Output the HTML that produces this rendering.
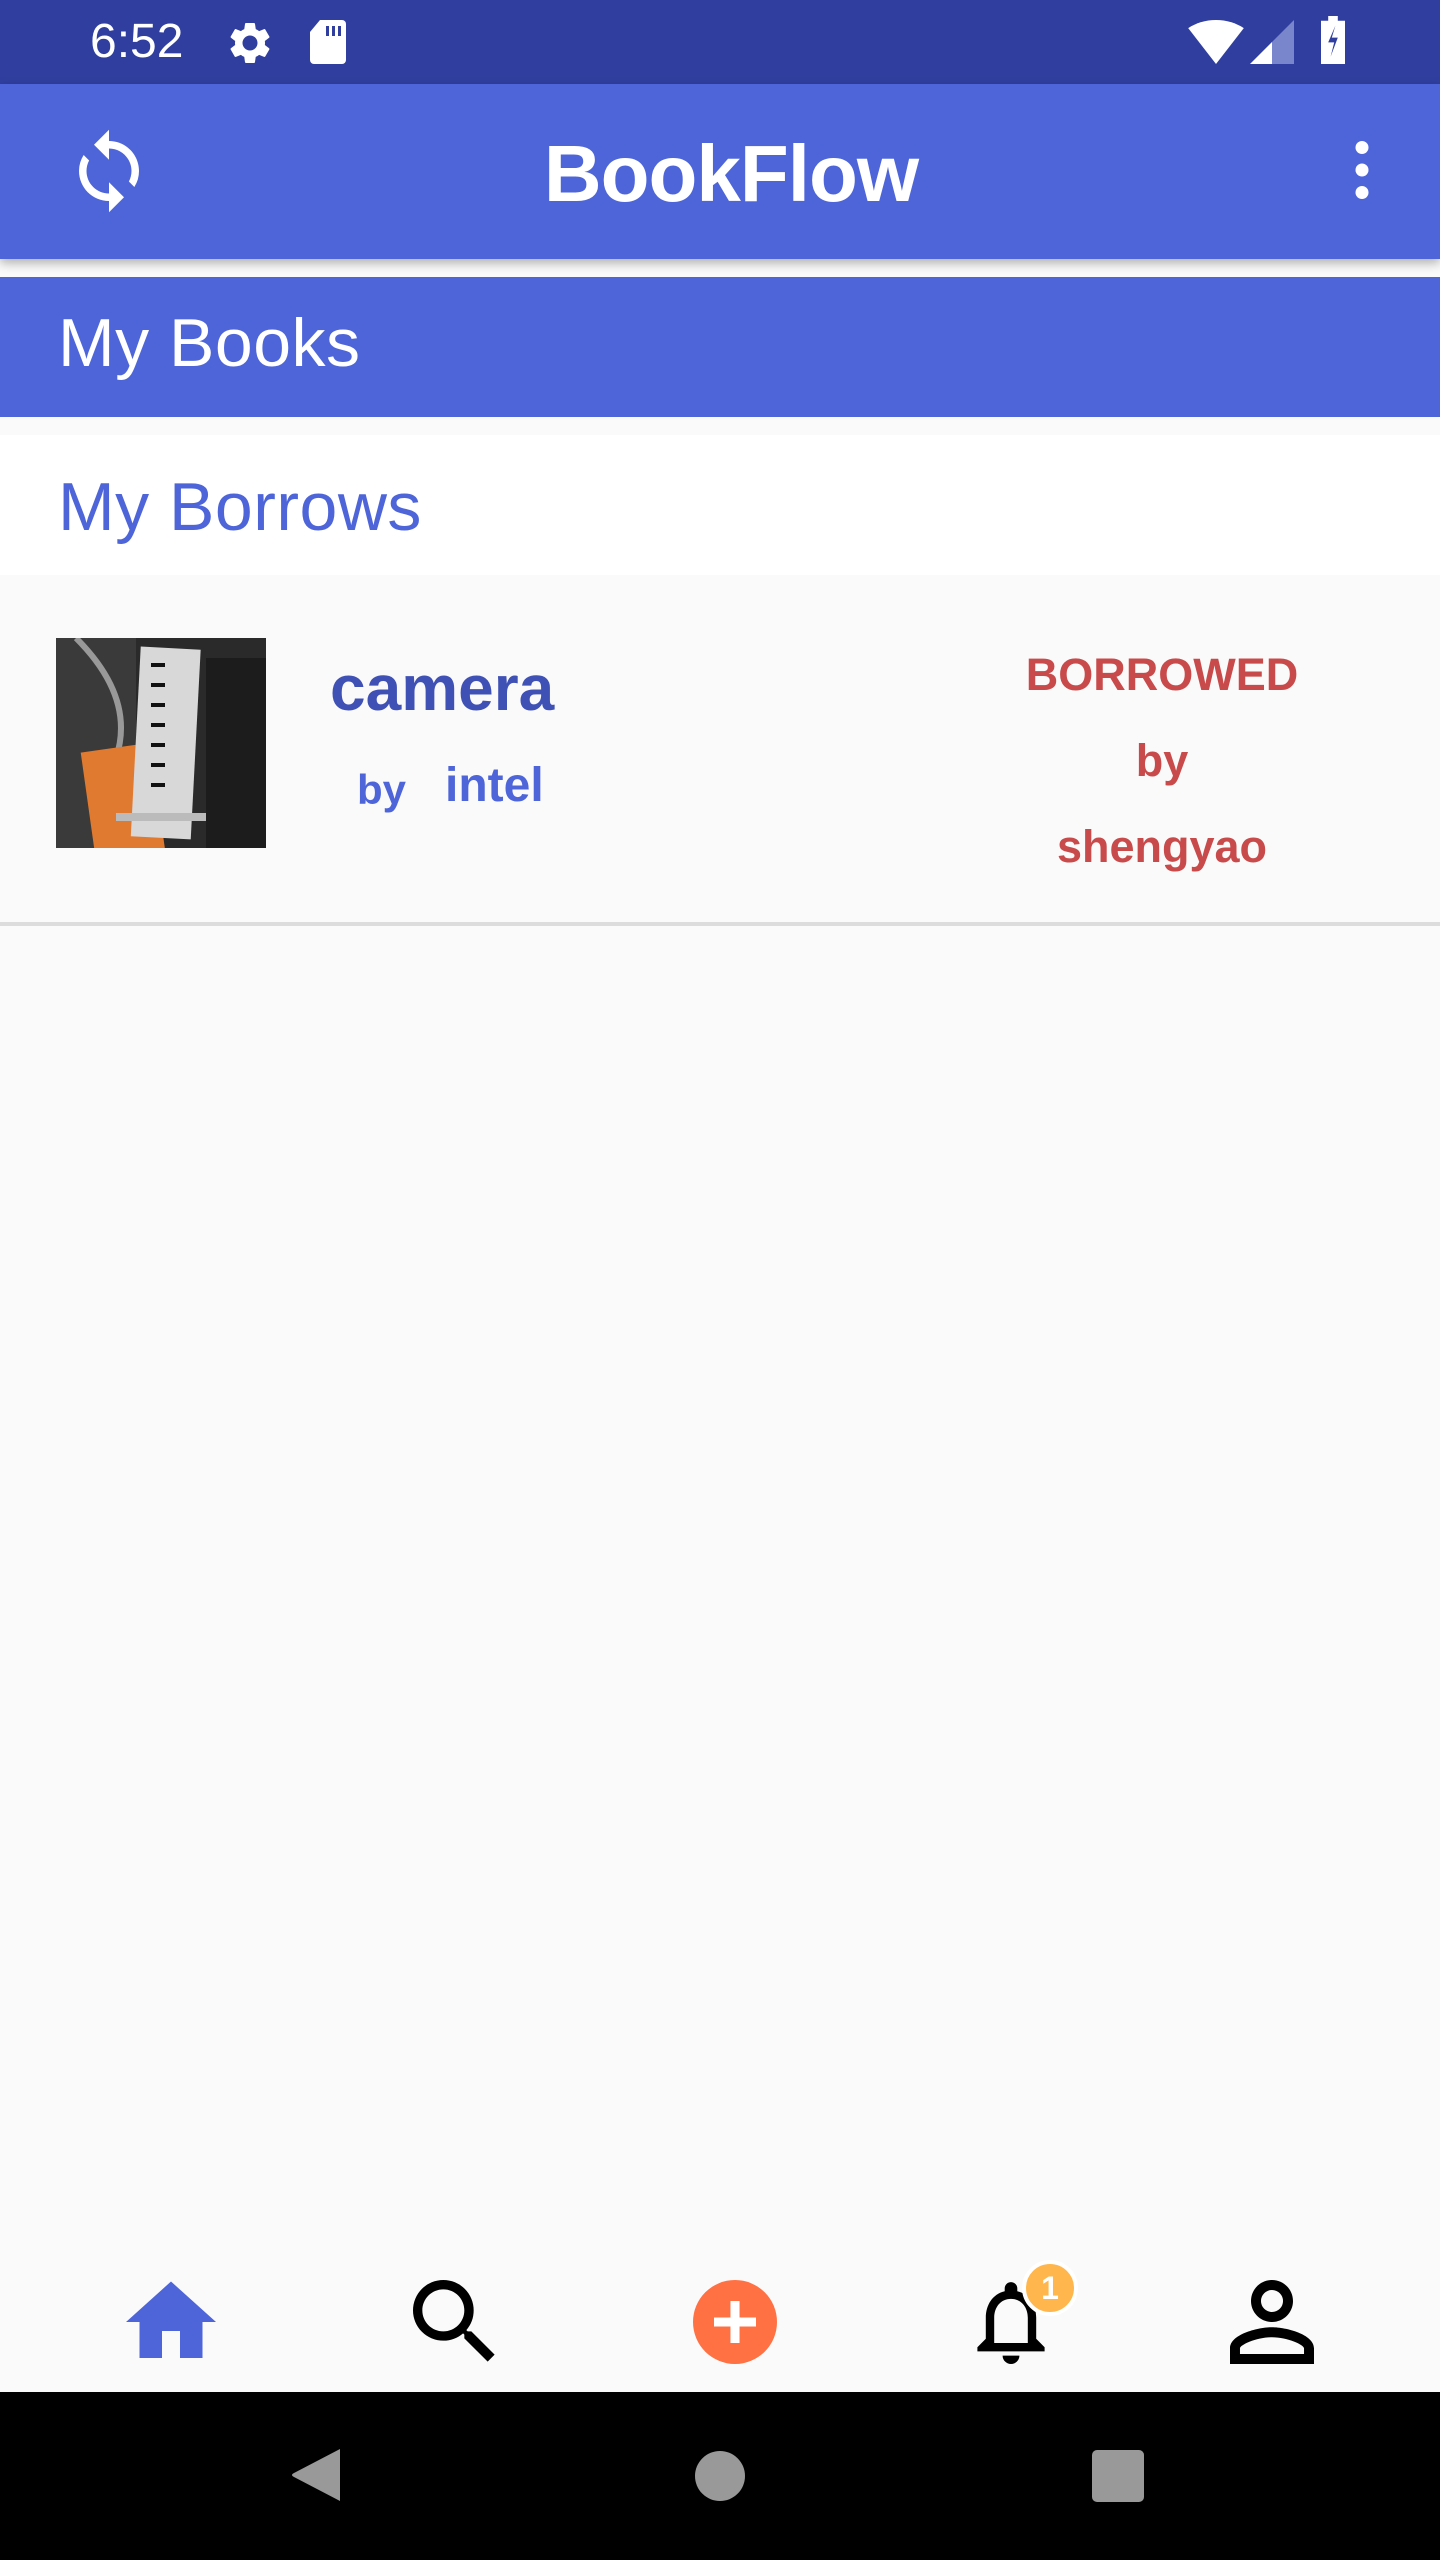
<!DOCTYPE html>
<html><head><meta charset="utf-8"><style>
*{margin:0;padding:0;box-sizing:border-box}
body{width:1440px;height:2560px;background:#fafafa;font-family:"Liberation Sans",Roboto,sans-serif;position:relative;overflow:hidden}
.abs{position:absolute}
</style></head><body>
<div class="abs" style="left:0;top:0;width:1440px;height:84px;background:#303f9f"></div>
<div class="abs" style="left:90px;top:14px;color:#fff;font-size:48px;line-height:56px">6:52</div>
<svg class="abs" style="left:222px;top:18px" width="56" height="50" viewBox="0 0 24 24"><path fill="#fff" d="M19.14 12.94c.04-.3.06-.61.06-.94 0-.32-.02-.64-.07-.94l2.030-1.58a.49.49 0 0 0 .12-.61l-1.92-3.32a.488.488 0 0 0-.59-.22l-2.39.96c-.5-.38-1.03-.7-1.62-.94l-.36-2.54a.484.484 0 0 0-.48-.41h-3.84c-.24 0-.43.17-.47.41l-.36 2.54c-.59.24-1.130.57-1.62.94l-2.39-.96c-.22-.08-.47 0-.59.22L2.74 8.87c-.12.21-.08.47.12.61l2.03 1.58c-.05.3-.09.63-.09.94s.02.64.07.94l-2.03 1.58a.49.49 0 0 0-.12.61l1.92 3.32c.12.22.37.29.59.22l2.39-.96c.5.38 1.03.7 1.62.94l.36 2.54c.05.24.24.41.48.41h3.84c.24 0 .44-.17.47-.41l.36-2.54c.59-.24 1.13-.56 1.62-.94l2.39.96c.22.08.47 0 .59-.22l1.92-3.32c.12-.22.07-.47-.12-.61l-2.01-1.58zM12 15.6c-1.98 0-3.6-1.62-3.6-3.6s1.62-3.6 3.6-3.6 3.6 1.62 3.6 3.6-1.62 3.6-3.6 3.6z"/></svg>
<svg class="abs" style="left:308px;top:18px" width="40" height="48" viewBox="0 0 20 24"><path fill="#fff" d="M6 1h11a2 2 0 0 1 2 2v18a2 2 0 0 1-2 2H3a2 2 0 0 1-2-2V7z"/><rect x="9" y="4" width="1.5" height="5" fill="#303f9f"/><rect x="12" y="4" width="1.5" height="5" fill="#303f9f"/><rect x="15" y="4" width="1.5" height="5" fill="#303f9f"/></svg>
<svg class="abs" style="left:1188px;top:20px" width="56" height="44" viewBox="0 0 24 19"><path fill="#fff" d="M12 19L0 3.5C3.3 1.3 7.5 0 12 0s8.7 1.3 12 3.5z"/></svg>
<svg class="abs" style="left:1250px;top:20px" width="44" height="44" viewBox="0 0 22 22"><path fill="#fff" d="M0 22L11 11V22z"/><path fill="#7986cb" d="M11 11L22 0V22H11z"/></svg>
<svg class="abs" style="left:1318px;top:16px" width="30" height="48" viewBox="0 0 12 20"><path fill="#fff" d="M4 0h4v2h3v18H1V2h3z"/><path fill="#303f9f" d="M7 4L4 11h2.5L5 17l3-8H5.5z"/></svg>

<div class="abs" style="left:0;top:84px;width:1440px;height:175px;background:#4d65d9;box-shadow:0 4px 10px rgba(0,0,0,.3)"></div>
<svg class="abs" style="left:64px;top:122px" width="90" height="98" viewBox="0 0 24 24"><path fill="#fff" d="M12 4V1L8 5l4 4V6c3.31 0 6 2.69 6 6 0 1.01-.25 1.97-.7 2.8l1.46 1.46A7.93 7.93 0 0 0 20 12c0-4.42-3.58-8-8-8zm0 14c-3.310 0-6-2.69-6-6 0-1.01.25-1.97.7-2.8L5.24 7.74A7.93 7.93 0 0 0 4 12c0 4.42 3.58 8 8 8v3l4-4-4-4v3z"/></svg>
<div class="abs" style="left:0;width:1440px;top:124px;text-align:center;color:#fff;font-weight:bold;font-size:80px;line-height:100px;padding-left:22px;letter-spacing:-1px">BookFlow</div>
<svg class="abs" style="left:1340px;top:140px" width="44" height="60" viewBox="0 0 10 24"><circle cx="5" cy="3" r="2.6" fill="#fff"/><circle cx="5" cy="12" r="2.6" fill="#fff"/><circle cx="5" cy="21" r="2.6" fill="#fff"/></svg>

<div class="abs" style="left:0;top:277px;width:1440px;height:140px;background:#4d65d9"></div>
<div class="abs" style="left:58px;top:298px;color:#fff;font-size:68px;line-height:90px;letter-spacing:0.5px">My Books</div>
<div class="abs" style="left:0;top:435px;width:1440px;height:140px;background:#fff"></div>
<div class="abs" style="left:58px;top:462px;color:#4d65d9;font-size:68px;line-height:90px;letter-spacing:0.5px">My Borrows</div>

<svg class="abs" style="left:56px;top:638px" width="210" height="210" viewBox="0 0 210 210">
<rect width="210" height="210" fill="#2a2a2a"/>
<rect x="0" y="0" width="80" height="210" fill="#3a3a3a"/>
<path d="M20 0 Q80 60 60 120 L40 200" stroke="#999" stroke-width="6" fill="none"/>
<rect x="30" y="110" width="70" height="140" fill="#e07a30" transform="rotate(-8 60 150)"/>
<rect x="80" y="10" width="60" height="190" fill="#d8d8d8" transform="rotate(3 110 100)"/>
<g fill="#111"><rect x="95" y="25" width="14" height="4"/><rect x="95" y="45" width="14" height="4"/><rect x="95" y="65" width="14" height="4"/><rect x="95" y="85" width="14" height="4"/><rect x="95" y="105" width="14" height="4"/><rect x="95" y="125" width="14" height="4"/><rect x="95" y="145" width="14" height="4"/></g>
<rect x="60" y="175" width="100" height="8" fill="#bbb"/>
<rect x="150" y="20" width="60" height="190" fill="#1c1c1c"/>
</svg>
<div class="abs" style="left:330px;top:648px;color:#3f51b5;font-weight:bold;font-size:64px;line-height:80px">camera</div>
<div class="abs" style="left:357px;top:760px;color:#4d65d9;font-weight:bold;font-size:42px;line-height:60px">by</div>
<div class="abs" style="left:445px;top:756px;color:#4d65d9;font-weight:bold;font-size:48px;line-height:60px">intel</div>
<div class="abs" style="left:962px;width:400px;top:632px;text-align:center;color:#c94a4a;font-weight:bold;font-size:45px;line-height:86px">BORROWED<br>by<br>shengyao</div>
<div class="abs" style="left:0;top:922px;width:1440px;height:4px;background:#dcdcdc"></div>

<svg class="abs" style="left:126px;top:2280px" width="90" height="84" viewBox="2 3 20 18"><path fill="#4d65d9" d="M10 20v-6h4v6h5v-8h3L12 3 2 12h3v8z"/></svg>
<svg class="abs" style="left:410px;top:2280px" width="90" height="84" viewBox="3 3 18 18"><path fill="#000" d="M15.5 14h-.79l-.28-.27A6.47 6.47 0 0 0 16 9.5 6.5 6.5 0 1 0 9.5 16c1.61 0 3.09-.59 4.23-1.57l.27.28v.79l5 4.99L20.49 19l-4.99-5zm-6 0C7.01 14 5 11.99 5 9.5S7.01 5 9.5 5 14 7.01 14 9.5 11.99 14 9.5 14z"/></svg>
<svg class="abs" style="left:693px;top:2280px" width="84" height="84" viewBox="0 0 24 24"><circle cx="12" cy="12" r="12" fill="#ff7043"/><path d="M12 6v12M6 12h12" stroke="#fff" stroke-width="2.6"/></svg>
<svg class="abs" style="left:966px;top:2280px" width="90" height="84" viewBox="4 2 16 20"><path fill="#000" d="M12 22c1.1 0 2-.9 2-2h-4a2 2 0 0 0 2 2zm6-6v-5c0-3.07-1.64-5.64-4.5-6.32V4c0-.83-.67-1.5-1.5-1.5s-1.5.67-1.5 1.5v.68C7.63 5.36 6 7.92 6 11v5l-2 2v1h16v-1l-2-2zm-2 1H8v-6c0-2.48 1.51-4.5 4-4.5s4 2.02 4 4.5v6z"/></svg>
<div class="abs" style="left:1022px;top:2260px;width:56px;height:56px;border-radius:50%;background:#ffb74d;border:4px solid #fff;color:#fff;font-weight:bold;font-size:32px;line-height:48px;text-align:center">1</div>
<svg class="abs" style="left:1230px;top:2280px" width="84" height="84" viewBox="4 4 16 16"><path fill="#000" d="M12 5.9a2.1 2.1 0 1 1 0 4.2 2.1 2.1 0 0 1 0-4.2m0 9c2.97 0 6.1 1.46 6.1 2.1v1.1H5.9V17c0-.64 3.13-2.1 6.1-2.1M12 4C9.79 4 8 5.79 8 8s1.79 4 4 4 4-1.79 4-4-1.79-4-4-4zm0 9c-2.67 0-8 1.34-8 4v3h16v-3c0-2.66-5.33-4-8-4z"/></svg>

<div class="abs" style="left:0;top:2392px;width:1440px;height:168px;background:#000"></div>
<svg class="abs" style="left:290px;top:2447px" width="54" height="56" viewBox="0 0 54 56"><path fill="#999" d="M50 2 L4 26 Q0 28 4 30 L50 54z"/></svg>
<div class="abs" style="left:695px;top:2451px;width:50px;height:50px;border-radius:50%;background:#999"></div>
<div class="abs" style="left:1092px;top:2450px;width:52px;height:52px;border-radius:5px;background:#999"></div>
</body></html>
